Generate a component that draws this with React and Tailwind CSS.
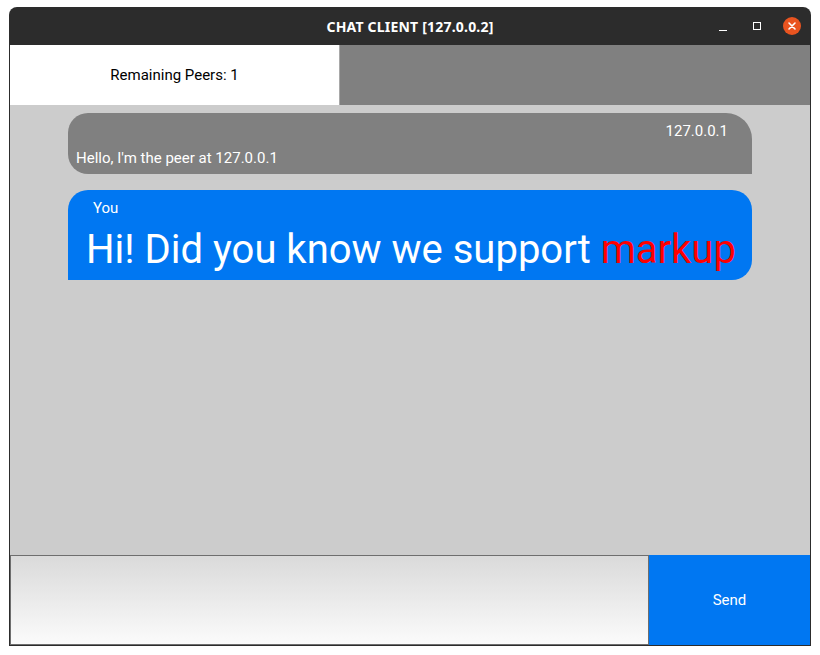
export default function App() {
  return (
    <div className="w-[820px] h-[655px] bg-white pt-[7px] pl-[9px]" style={{ fontFamily: "Roboto, 'Noto Sans', sans-serif" }}>
      <div className="w-[802px] h-[639px] flex flex-col bg-[#2c2c2c] rounded-t-[8px] overflow-hidden">
        <div className="h-[38px] shrink-0 relative flex items-center justify-center">
          <span className="text-white text-[14px] font-bold tracking-[0.2px]" style={{ fontFamily: "'Noto Sans', 'DejaVu Sans', sans-serif" }}>CHAT CLIENT [127.0.0.2]</span>
          <div className="absolute right-[10px] top-0 h-full flex items-center">
            <div className="w-[8px] h-[1px] bg-white mt-[8px] mr-[26px]" />
            <div className="w-[8px] h-[8px] border border-white mr-[22px]" />
            <div className="w-[18px] h-[18px] rounded-full bg-[#e95420] flex items-center justify-center">
              <svg width="10" height="10" viewBox="0 0 10 10"><path d="M2 2L8 8M8 2L2 8" stroke="white" strokeWidth="1.6" strokeLinecap="round" /></svg>
            </div>
          </div>
        </div>
        <div className="flex-1 flex flex-col mx-[1px] mb-[1px] bg-[#cccccc]">
          <div className="h-[60px] shrink-0 flex">
            <div className="w-[329px] bg-white flex items-center justify-center text-[15px] text-black">Remaining Peers: 1</div>
            <div className="w-[1px] bg-[#a8a8a8]" />
            <div className="flex-1 bg-[#808080]" />
          </div>
          <div className="flex-1 flex flex-col items-center pt-[8px] gap-[16px]">
            <div className="w-[684px] h-[61px] bg-[#808080] rounded-tl-[20px] rounded-bl-[20px] rounded-tr-[26px] text-white text-[15px] flex flex-col">
              <div className="text-right pr-[24px] pt-[9px] leading-[18px]">127.0.0.1</div>
              <div className="pl-[8px] pt-[9px] leading-[18px]">Hello, I'm the peer at 127.0.0.1</div>
            </div>
            <div className="w-[684px] h-[90px] bg-[#0077f2] rounded-tl-[20px] rounded-tr-[20px] rounded-br-[20px] text-white flex flex-col">
              <div className="pl-[25px] pt-[9px] text-[15px] leading-[18px]">You</div>
              <div className="pl-[18px] pt-[11px] text-[40px] leading-[44px] whitespace-nowrap">Hi! Did you know we support <span className="text-[#ff0000]">markup</span></div>
            </div>
          </div>
          <div className="h-[90px] shrink-0 flex">
            <div className="w-[639px] border border-[#6e6e6e] bg-gradient-to-b from-[#dadada] to-[#fbfbfb]" />
            <div className="flex-1 bg-[#0077f2] flex items-center justify-center text-white text-[15px]">Send</div>
          </div>
        </div>
      </div>
    </div>
  );
}
